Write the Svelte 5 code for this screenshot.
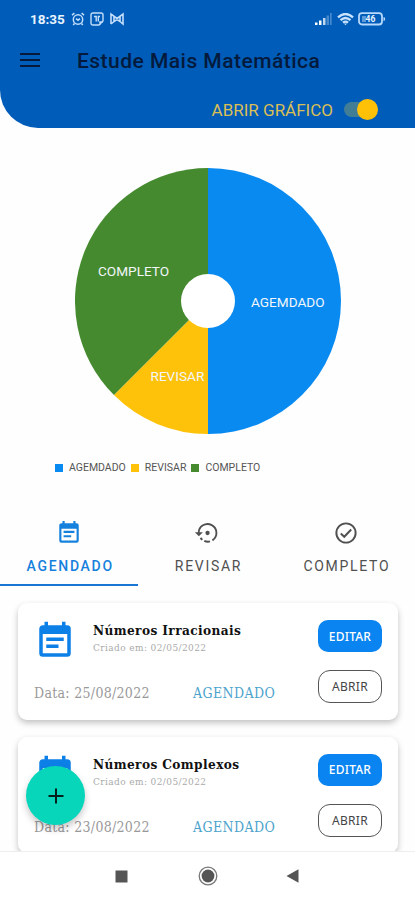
<script lang="ts">
    let showChart = true;
    let activeTab = 'agendado';

    const slices = [
        { label: 'AGEMDADO', color: '#098af0', d: 'M133 0A133 133 0 0 1 133 266Z', x: 176, y: 138.5 },
        { label: 'REVISAR', color: '#ffc20a', d: 'M133 133V266A133 133 0 0 1 38.95 227.05Z', x: 75.5, y: 212.5 },
        { label: 'COMPLETO', color: '#458a2f', d: 'M133 133L38.95 227.05A133 133 0 0 1 133 0Z', x: 23, y: 108 },
    ];

    const tabs = [
        { id: 'agendado', label: 'AGENDADO' },
        { id: 'revisar', label: 'REVISAR' },
        { id: 'completo', label: 'COMPLETO' },
    ];

    const cards = [
        { title: 'Números Irracionais', created: '02/05/2022', date: '25/08/2022' },
        { title: 'Números Complexos', created: '02/05/2022', date: '23/08/2022' },
    ];

    const calendar = 'M14 14H7v2h7m5 3H5V8h14m0-5h-1V1h-2v2H8V1H6v2H5c-1.11 0-2 .9-2 2v14a2 2 0 0 0 2 2h14a2 2 0 0 0 2-2V5a2 2 0 0 0-2-2m-2 7H7v2h10v-2z';
</script>

<div class="screen">
    <header>
        <div class="status">
            <span class="clock">18:35</span>
            <svg class="alarm" width="14" height="14" viewBox="0 0 14 14" fill="none" stroke="#c3defa" stroke-width="1.5">
                <circle cx="7" cy="7.5" r="4.7" />
                <path d="M1 3.2L3.4 1.2M13 3.2L10.6 1.2M3.5 11.5L2.2 13M10.5 11.5L11.8 13M5 6.6L7 8.2L9 6.6" />
            </svg>
            <svg class="note" width="14" height="14" viewBox="0 0 14 14" fill="none" stroke="#c3defa" stroke-width="1.4">
                <path d="M3 1H11Q13 1 13 3V9L9 13H3Q1 13 1 11V3Q1 1 3 1ZM13 10H10V13M4 4.5H6.2V9.5M8.3 9.5V4.5H10" />
            </svg>
            <svg class="mail" width="14" height="14" viewBox="0 0 14 14" fill="none" stroke="#c3defa" stroke-width="1.6">
                <path d="M1 12V2L7 6.5L13 2V12L10 9.5M1 12L4 9.5V5M10 4.8V9.5L7 7.6L4 9.5" />
            </svg>
            <svg class="signal" width="18" height="12" viewBox="0 0 18 12" fill="#fff">
                <path d="M0 9.5h2.5V12H0zM4 7.5h2.5V12H4z" />
                <path d="M8 5h2.5v7H8z" opacity=".75" />
                <path d="M11.5 2.5H14V12h-2.5zM15 0h1.7v12H15z" opacity=".28" />
            </svg>
            <svg class="wifi" width="17" height="13" viewBox="0 0 17 13" fill="none" stroke="#c9e3fc" stroke-width="2.3">
                <path d="M1 4.4Q8.5-2.4 16 4.4M3.5 7.2Q8.5 2.8 13.5 7.2M6 9.7Q8.5 7.5 11 9.7" />
                <path d="M7 10.5H10L8.5 12.3Z" fill="#c9e3fc" stroke="none" />
            </svg>
            <svg class="battery" width="28" height="14" viewBox="0 0 28 14">
                <rect x="1" y="1.2" width="23" height="11.3" rx="3" fill="none" stroke="#b6d8fb" stroke-width="1.8" />
                <path d="M25.5 5Q27.2 5.2 27.2 7Q27.2 8.8 25.5 9Z" fill="#b6d8fb" />
                <path d="M4 4h4v6H4z" fill="#5d9ad8" />
                <text x="7.6" y="10">46</text>
            </svg>
        </div>
        <div class="bar">
            <svg width="20" height="14" viewBox="0 0 20 14" stroke="#041a3c" stroke-width="2">
                <path d="M0 1H20M0 7H20M0 13H20" />
            </svg>
            <h1>Estude Mais Matemática</h1>
        </div>
        <div class="toggle">
            <span>ABRIR GRÁFICO</span>
            <button class="switch" class:on={showChart} aria-label="Abrir gráfico" on:click={() => (showChart = !showChart)}>
                <i></i>
            </button>
        </div>
    </header>

    <section class="chart">
        {#if showChart}
            <svg width="266" height="267" viewBox="0 0 266 267">
                {#each slices as slice}
                    <path d={slice.d} fill={slice.color} />
                {/each}
                <circle cx="133" cy="133" r="27" fill="#fff" />
                {#each slices as slice}
                    <text x={slice.x} y={slice.y}>{slice.label}</text>
                {/each}
            </svg>
            <div class="legend">
                {#each slices as slice}
                    <span><i style="background: {slice.color}"></i>{slice.label}</span>
                {/each}
            </div>
        {/if}
    </section>

    <nav class="tabs">
        {#each tabs as tab}
            <button class:active={activeTab === tab.id} on:click={() => (activeTab = tab.id)}>
                <svg width="26" height="26" viewBox="0 0 24 24" fill="currentColor">
                    {#if tab.id === 'agendado'}
                        <path d={calendar} />
                    {:else if tab.id === 'revisar'}
                        <g fill="none" stroke="currentColor" stroke-width="1.7">
                            <path d="M4.3 12.5V12A8.2 8.2 0 1 1 17 18.8M14.8 19.8A8.2 8.2 0 0 1 9.5 19.3M7.8 18.3A8.2 8.2 0 0 1 6 16.5" />
                        </g>
                        <path d="M.8 11.2H8.2L4.5 15Z" />
                        <circle cx="12.5" cy="12" r="2" />
                    {:else}
                        <g fill="none" stroke="currentColor" stroke-width="1.8">
                            <circle cx="12" cy="12" r="8.9" />
                            <path d="M7.2 12.4L10.4 15.5L16.8 8.8" />
                        </g>
                    {/if}
                </svg>
                <span>{tab.label}</span>
            </button>
        {/each}
    </nav>

    <main>
        {#each cards as card}
            <article>
                <svg class="cal" width="42" height="42" viewBox="0 0 24 24" fill="#0d80e8">
                    <path d={calendar} />
                </svg>
                <div class="info">
                    <h2>{card.title}</h2>
                    <p>Criado em: {card.created}</p>
                </div>
                <button class="edit">EDITAR</button>
                <div class="date">Data: {card.date}</div>
                <div class="state">AGENDADO</div>
                <button class="open">ABRIR</button>
            </article>
        {/each}
    </main>

    <button class="fab" aria-label="Adicionar">
        <svg width="16" height="16" viewBox="0 0 16 16" stroke="#06201d" stroke-width="2">
            <path d="M8 .5V15.5M.5 8H15.5" />
        </svg>
    </button>

    <footer>
        <svg width="13" height="13" viewBox="0 0 13 13"><path d="M.5 .5h12v12H.5z" fill="#555" /></svg>
        <svg width="20" height="20" viewBox="0 0 20 20">
            <circle cx="10" cy="10" r="8.8" fill="none" stroke="#777" stroke-width="1.3" />
            <circle cx="10" cy="10" r="6.4" fill="#555" />
        </svg>
        <svg width="13" height="14" viewBox="0 0 13 14"><path d="M.5 7L12.5 .3V13.7Z" fill="#555" /></svg>
    </footer>
</div>

<style>
    :global(body) {
        margin: 0;
        background: #fff;
    }

    .screen {
        position: relative;
        display: flex;
        flex-direction: column;
        width: 415px;
        height: 900px;
        overflow: hidden;
        font-family: Roboto, sans-serif;
        background: #fefefe;
    }

    button {
        padding: 0;
        border: none;
        background: none;
        font-family: inherit;
        white-space: nowrap;
    }

    svg {
        display: block;
        flex-shrink: 0;
    }

    header {
        box-sizing: border-box;
        height: 128px;
        flex-shrink: 0;
        background: #005cb9;
        border-bottom-left-radius: 38px;
    }

    .status {
        display: flex;
        align-items: center;
        height: 38px;
        padding: 0 29px 0 30px;
    }

    .clock {
        width: 41px;
        font-size: 13.5px;
        font-weight: 700;
        color: #e8f4ff;
    }

    .note {
        margin-left: 5px;
    }

    .mail {
        margin-left: 6px;
    }

    .signal {
        margin-left: auto;
    }

    .wifi {
        margin: 0 4px;
    }

    .battery text {
        font-size: 8.5px;
        font-weight: 700;
        fill: #e8f4ff;
    }

    .bar {
        display: flex;
        align-items: center;
        height: 44px;
        padding-left: 20px;
    }

    h1 {
        margin: 2px 0 0 37px;
        font-size: 21px;
        font-weight: 500;
        line-height: 24px;
        letter-spacing: 0.47px;
        white-space: nowrap;
        color: #041a3c;
    }

    .toggle {
        display: flex;
        align-items: center;
        justify-content: flex-end;
        height: 55px;
        padding-right: 37px;
    }

    .toggle span {
        margin-right: 11px;
        font-size: 17px;
        color: #d9bf55;
    }

    .switch {
        display: flex;
        align-items: center;
        width: 34px;
        height: 15px;
        border-radius: 8px;
        background: #417e96;
    }

    .switch.on {
        justify-content: flex-end;
    }

    .switch i {
        width: 21px;
        height: 21px;
        border-radius: 50%;
        background: #ffc107;
    }

    .chart {
        box-sizing: border-box;
        height: 384px;
        flex-shrink: 0;
        padding: 40px 0 0 75px;
    }

    .chart text {
        font-size: 13.6px;
        fill: #f2f6fa;
    }

    .legend {
        display: flex;
        margin: 27px 0 0 -20px;
        font-size: 10.5px;
        line-height: 12px;
        color: #555;
    }

    .legend span {
        display: flex;
        align-items: center;
        margin-right: 5px;
    }

    .legend i {
        width: 8px;
        height: 8px;
        margin-right: 6px;
    }

    .tabs {
        display: grid;
        grid-template-columns: repeat(3, 1fr);
        height: 74px;
        flex-shrink: 0;
    }

    .tabs button {
        display: flex;
        flex-direction: column;
        align-items: center;
        padding-top: 8px;
        border-bottom: 2px solid transparent;
        color: #505050;
    }

    .tabs button.active {
        color: #1681dd;
        border-bottom-color: #1976d2;
    }

    .tabs span {
        margin: 11px -2px 0 0;
        font-size: 14px;
        line-height: 18px;
        letter-spacing: 1.7px;
    }

    .tabs .active span {
        font-weight: 500;
    }

    main {
        flex: 1;
        min-height: 0;
        padding: 17px 17px 0 18px;
        overflow: hidden;
    }

    article {
        display: grid;
        grid-template-columns: 58px 100px 125px 64px;
        grid-template-rows: 50px 33px;
        box-sizing: border-box;
        height: 116.5px;
        margin-bottom: 17px;
        padding: 17px 0 0 17px;
        border-radius: 9px;
        background: #fff;
        box-shadow: 0 3px 6px rgba(0, 0, 0, 0.24);
        font-family: 'Roboto Slab', 'DejaVu Serif Condensed', 'DejaVu Serif', serif;
        white-space: nowrap;
    }

    .cal {
        margin-left: -1px;
    }

    .info {
        grid-column: 2 / 4;
    }

    h2 {
        margin: 0;
        font-size: 13.5px;
        font-weight: 700;
        line-height: 20px;
        letter-spacing: 0.4px;
        color: #111;
    }

    p {
        margin: 0;
        font-size: 10px;
        line-height: 16px;
        letter-spacing: 0.4px;
        color: #aaa;
    }

    .edit,
    .open {
        box-sizing: border-box;
        width: 64px;
        height: 32px;
        border-radius: 10px;
        font-family: 'Noto Sans', sans-serif;
        font-size: 12px;
    }

    .edit {
        color: #fff;
        font-weight: 500;
        letter-spacing: 0.2px;
        background: #0a84f0;
    }

    .open {
        height: 33px;
        border: 1px solid #555;
        border-radius: 12px;
        color: #444;
        letter-spacing: 0.3px;
        background: #fff;
    }

    .date {
        grid-column: 1 / 3;
        padding-top: 14px;
        margin-left: -1px;
        font-size: 14px;
        line-height: 18px;
        letter-spacing: 0.3px;
        color: #999;
    }

    .state {
        padding-top: 14px;
        font-size: 14px;
        line-height: 18px;
        letter-spacing: 0.4px;
        color: #4ba3cc;
    }

    .fab {
        position: absolute;
        left: 26px;
        top: 766px;
        display: flex;
        align-items: center;
        justify-content: center;
        width: 59px;
        height: 59px;
        border-radius: 50%;
        background: #07d6bb;
        box-shadow: 0 4px 7px rgba(0, 0, 0, 0.22);
    }

    footer {
        display: flex;
        align-items: center;
        box-sizing: border-box;
        height: 49px;
        flex-shrink: 0;
        padding-left: 115px;
        border-top: 1px solid #eee;
        background: #fff;
    }

    footer svg + svg {
        margin-left: 70px;
    }

    footer svg:last-child {
        margin-left: 68px;
    }
</style>
